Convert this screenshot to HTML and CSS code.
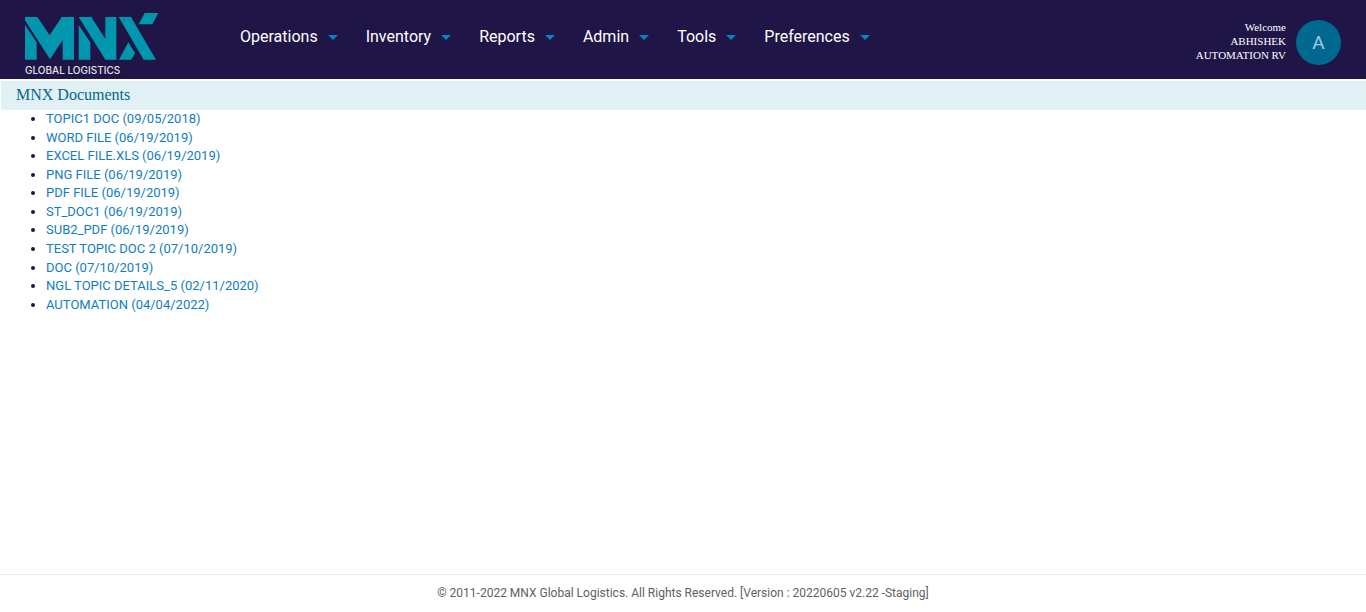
FILE: index.html
```html
<!DOCTYPE html>
<html lang="en">
<head>
<meta charset="utf-8">
<title>MNX Documents</title>
<link rel="stylesheet" href="styles.css">
</head>
<body>
<header class="header">
  <a class="logo" href="#" aria-label="MNX Global Logistics">
    <svg class="logo-mark" width="134" height="47" viewBox="0 0 402 141" aria-hidden="true">
      <path d="M0 36L35 88V140H0ZM0 12H37L74 67L110 12H147V140H113V81L75 139L0 22ZM161 36L196 88V140H161ZM161 12H199L241 78V12H274V140H241ZM281 12H318L393 140H356ZM282 140L310 88L330 120L319 140ZM359 0H400L382 34H341Z" fill="#0096ae"/>
    </svg>
    <span class="logo-text">GLOBAL LOGISTICS</span>
  </a>
  <nav class="nav">
    <button class="nav-item" type="button">Operations</button>
    <button class="nav-item" type="button">Inventory</button>
    <button class="nav-item" type="button">Reports</button>
    <button class="nav-item" type="button">Admin</button>
    <button class="nav-item" type="button">Tools</button>
    <button class="nav-item" type="button">Preferences</button>
  </nav>
  <div class="user">
    <div class="welcome">Welcome<br>ABHISHEK<br>AUTOMATION RV</div>
    <button class="avatar" type="button">A</button>
  </div>
</header>
<main class="main">
  <h1 class="title">MNX Documents</h1>
  <ul class="docs">
    <li><a href="#">TOPIC1 DOC (09/05/2018)</a></li>
    <li><a href="#">WORD FILE (06/19/2019)</a></li>
    <li><a href="#">EXCEL FILE.XLS (06/19/2019)</a></li>
    <li><a href="#">PNG FILE (06/19/2019)</a></li>
    <li><a href="#">PDF FILE (06/19/2019)</a></li>
    <li><a href="#">ST_DOC1 (06/19/2019)</a></li>
    <li><a href="#">SUB2_PDF (06/19/2019)</a></li>
    <li><a href="#">TEST TOPIC DOC 2 (07/10/2019)</a></li>
    <li><a href="#">DOC (07/10/2019)</a></li>
    <li><a href="#">NGL TOPIC DETAILS_5 (02/11/2020)</a></li>
    <li><a href="#">AUTOMATION (04/04/2022)</a></li>
  </ul>
</main>
<footer class="footer">© 2011-2022 MNX Global Logistics. All Rights Reserved. [Version : 20220605 v2.22 -Staging]</footer>
</body>
</html>
```
FILE: styles.css
```css
* { box-sizing: border-box; }
body {
  margin: 0;
  min-height: 100vh;
  display: flex;
  flex-direction: column;
  background: #fff;
  color: #201547;
  font-family: Roboto, sans-serif;
  font-size: 13px;
  line-height: 1.43;
}
a { color: #0f7dc2; text-decoration: none; }
button { border: 0; padding: 0; font-family: inherit; cursor: pointer; }
.header {
  display: flex;
  align-items: flex-start;
  background: #201547;
  color: #fff;
  padding: 13px 25px 4px;
}
.logo { display: flex; flex-direction: column; gap: 5px; width: 215px; }
.logo-mark { display: block; }
.logo-text {
  color: #e4e2ea;
  font-family: Inter, sans-serif;
  font-size: 10px;
  font-weight: 500;
  line-height: 10px;
}
.nav { display: flex; gap: 28px; padding-top: 14px; }
.nav-item {
  display: flex;
  align-items: center;
  gap: 10px;
  background: none;
  color: #fff;
  font-size: 16px;
  line-height: 20px;
}
.nav-item::after {
  content: "";
  border: 5px solid transparent;
  border-top-color: #0085ca;
  border-bottom: 0;
}
.user { display: flex; align-items: center; gap: 10px; margin-left: auto; padding-top: 7px; }
.welcome {
  padding-bottom: 3px;
  text-align: right;
  font-family: "Liberation Serif", serif;
  font-size: 11px;
  line-height: 14px;
}
.avatar {
  width: 45px;
  height: 45px;
  border-radius: 50%;
  background: #006990;
  color: #a6cbe0;
  font-size: 19px;
}
.main { flex: 1; }
.title {
  margin: 2px 0 0 1px;
  padding: 5px 15px 6px;
  background: #e1f0f4;
  color: #006990;
  font-family: "Liberation Serif", serif;
  font-size: 16px;
  font-weight: 400;
  line-height: 18px;
}
.docs { margin: 0; padding: 0 0 0 46px; }
.footer {
  border-top: 1px solid #eee;
  padding: 9px 15px 10px;
  color: #616161;
  text-align: center;
  font-size: 12px;
  line-height: 18px;
}
```
